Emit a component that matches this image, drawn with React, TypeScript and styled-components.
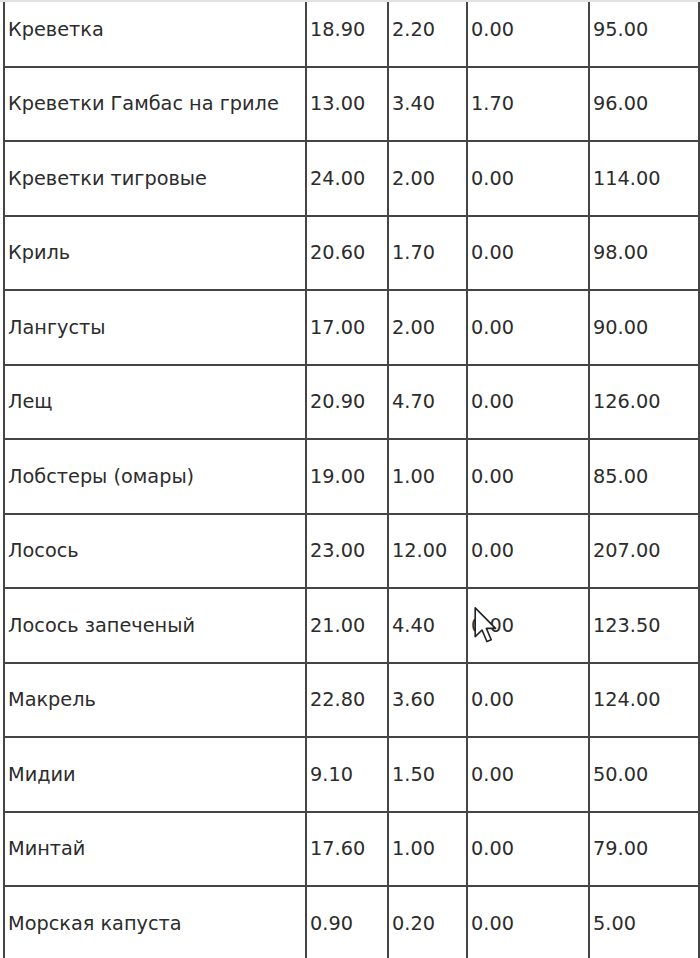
import React from "react";
import styled, { createGlobalStyle } from "styled-components";

const Global = createGlobalStyle`
  html, body { margin: 0; padding: 0; background: #ffffff; }
  body { font-family: "DejaVu Sans", Verdana, sans-serif; }
`;

const Page = styled.div`
  position: relative;
  width: 700px;
  height: 958px;
  overflow: hidden;
  background: #ffffff;
  border-top: 2px solid #e2e2e2;
  box-sizing: border-box;
`;

const Clip = styled.div`
  padding-left: 3px;
  padding-top: 1px;
`;

const Table = styled.table`
  border-collapse: collapse;
  table-layout: fixed;
  width: 697px;
  margin-top: -12px;
`;

const Row = styled.tr`
  height: 74.5px;
`;

const Cell = styled.td<{ $w: number }>`
  width: ${(p) => p.$w}px;
  border: 2px solid #454545;
  padding: 0 0 0 3px;
  box-sizing: border-box;
  font-family: "DejaVu Sans", Verdana, sans-serif;
  font-size: 19.3px;
  color: #2c2c2c;
  vertical-align: middle;
  white-space: nowrap;
  overflow: hidden;
`;

const Cursor = styled.svg`
  position: absolute;
  left: 474px;
  top: 605px;
  width: 24px;
  height: 36px;
`;

const widths = [302, 82, 79, 122, 110];

const rows: string[][] = [
  ["Креветка", "18.90", "2.20", "0.00", "95.00"],
  ["Креветки Гамбас на гриле", "13.00", "3.40", "1.70", "96.00"],
  ["Креветки тигровые", "24.00", "2.00", "0.00", "114.00"],
  ["Криль", "20.60", "1.70", "0.00", "98.00"],
  ["Лангусты", "17.00", "2.00", "0.00", "90.00"],
  ["Лещ", "20.90", "4.70", "0.00", "126.00"],
  ["Лобстеры (омары)", "19.00", "1.00", "0.00", "85.00"],
  ["Лосось", "23.00", "12.00", "0.00", "207.00"],
  ["Лосось запеченый", "21.00", "4.40", "0.00", "123.50"],
  ["Макрель", "22.80", "3.60", "0.00", "124.00"],
  ["Мидии", "9.10", "1.50", "0.00", "50.00"],
  ["Минтай", "17.60", "1.00", "0.00", "79.00"],
  ["Морская капуста", "0.90", "0.20", "0.00", "5.00"],
];

export default function App() {
  return (
    <>
      <Global />
      <Page>
        <Clip>
          <Table>
            <tbody>
              {rows.map((r, i) => (
                <Row key={i}>
                  {r.map((c, j) => (
                    <Cell key={j} $w={widths[j]}>
                      {c}
                    </Cell>
                  ))}
                </Row>
              ))}
            </tbody>
          </Table>
        </Clip>
        <Cursor viewBox="0 0 13 20">
          <path
            d="M0.5 0.5 L0.5 16.5 L4.3 12.8 L7 19.2 L9.4 18.2 L6.7 11.9 L11.8 11.9 Z"
            fill="#ffffff"
            stroke="#222222"
            strokeWidth="0.9"
            strokeLinejoin="round"
          />
        </Cursor>
      </Page>
    </>
  );
}
